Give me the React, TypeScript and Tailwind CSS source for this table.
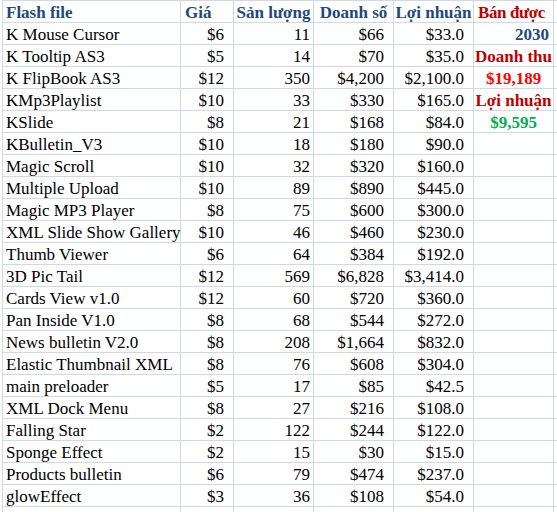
import React from 'react'

type Row = [string, string, string, string, string]

const rows: Row[] = [
  ['K Mouse Cursor', '$6', '11', '$66', '$33.0'],
  ['K Tooltip AS3', '$5', '14', '$70', '$35.0'],
  ['K FlipBook AS3', '$12', '350', '$4,200', '$2,100.0'],
  ['KMp3Playlist', '$10', '33', '$330', '$165.0'],
  ['KSlide', '$8', '21', '$168', '$84.0'],
  ['KBulletin_V3', '$10', '18', '$180', '$90.0'],
  ['Magic Scroll', '$10', '32', '$320', '$160.0'],
  ['Multiple Upload', '$10', '89', '$890', '$445.0'],
  ['Magic MP3 Player', '$8', '75', '$600', '$300.0'],
  ['XML Slide Show Gallery', '$10', '46', '$460', '$230.0'],
  ['Thumb Viewer', '$6', '64', '$384', '$192.0'],
  ['3D Pic Tail', '$12', '569', '$6,828', '$3,414.0'],
  ['Cards View v1.0', '$12', '60', '$720', '$360.0'],
  ['Pan Inside V1.0', '$8', '68', '$544', '$272.0'],
  ['News bulletin V2.0', '$8', '208', '$1,664', '$832.0'],
  ['Elastic Thumbnail XML', '$8', '76', '$608', '$304.0'],
  ['main preloader', '$5', '17', '$85', '$42.5'],
  ['XML Dock Menu', '$8', '27', '$216', '$108.0'],
  ['Falling Star', '$2', '122', '$244', '$122.0'],
  ['Sponge Effect', '$2', '15', '$30', '$15.0'],
  ['Products bulletin', '$6', '79', '$474', '$237.0'],
  ['glowEffect', '$3', '36', '$108', '$54.0'],
]

// cột tổng kết bên phải (6 dòng đầu)
const summary: { text: string; cls: string }[] = [
  { text: '2030', cls: 'justify-end pr-[4px] font-bold text-[#1f497d]' },
  { text: 'Doanh thu', cls: 'justify-center font-bold text-[#c00000]' },
  { text: '$19,189', cls: 'justify-center font-bold text-[#ff0000]' },
  { text: 'Lợi nhuận', cls: 'justify-center font-bold text-[#c00000]' },
  { text: '$9,595', cls: 'justify-center font-bold text-[#00b050]' },
]

const cell = 'flex h-[22px] items-end whitespace-nowrap border-b border-r border-[#d0d7e5] leading-[18px]'

function Cell({ className = '', children }: { className?: string; children?: React.ReactNode }) {
  return <div className={`${cell} ${className}`}>{children}</div>
}

export default function App() {
  return (
    <div className="h-[512px] w-[557px] overflow-hidden bg-white pl-[2px] text-[17px] text-black" style={{ fontFamily: '"Liberation Serif", "Times New Roman", serif' }}>
      <div className="grid grid-cols-[178px_53px_80px_80px_80px_80px_1fr] border-l border-t border-[#d0d7e5]">
        <Cell className="pl-[3px] font-bold text-[#1f497d]">Flash file</Cell>
        <Cell className="pl-[4px] font-bold text-[#1f497d]">Giá</Cell>
        <Cell className="justify-center font-bold text-[#1f497d]">Sản lượng</Cell>
        <Cell className="justify-center font-bold text-[#1f497d]">Doanh số</Cell>
        <Cell className="justify-center font-bold text-[#1f497d]">Lợi nhuận</Cell>
        <Cell className="pl-[4px] font-bold tracking-[-0.4px] text-[#c00000]">Bán được</Cell>
        <Cell className="border-r-0" />

        {rows.map((r, i) => (
          <React.Fragment key={r[0]}>
            <Cell className="pl-[3px]">{r[0]}</Cell>
            <Cell className="justify-end pr-[9px]">{r[1]}</Cell>
            <Cell className="justify-end pr-[3px]">{r[2]}</Cell>
            <Cell className="justify-end pr-[9px]">{r[3]}</Cell>
            <Cell className="justify-end pr-[9px]">{r[4]}</Cell>
            {summary[i] ? <Cell className={summary[i].cls}>{summary[i].text}</Cell> : <Cell />}
            <Cell className="border-r-0" />
          </React.Fragment>
        ))}

        {Array.from({ length: 7 }).map((_, i) => (
          <Cell key={i} className={i === 6 ? 'border-r-0' : ''} />
        ))}
      </div>
    </div>
  )
}
